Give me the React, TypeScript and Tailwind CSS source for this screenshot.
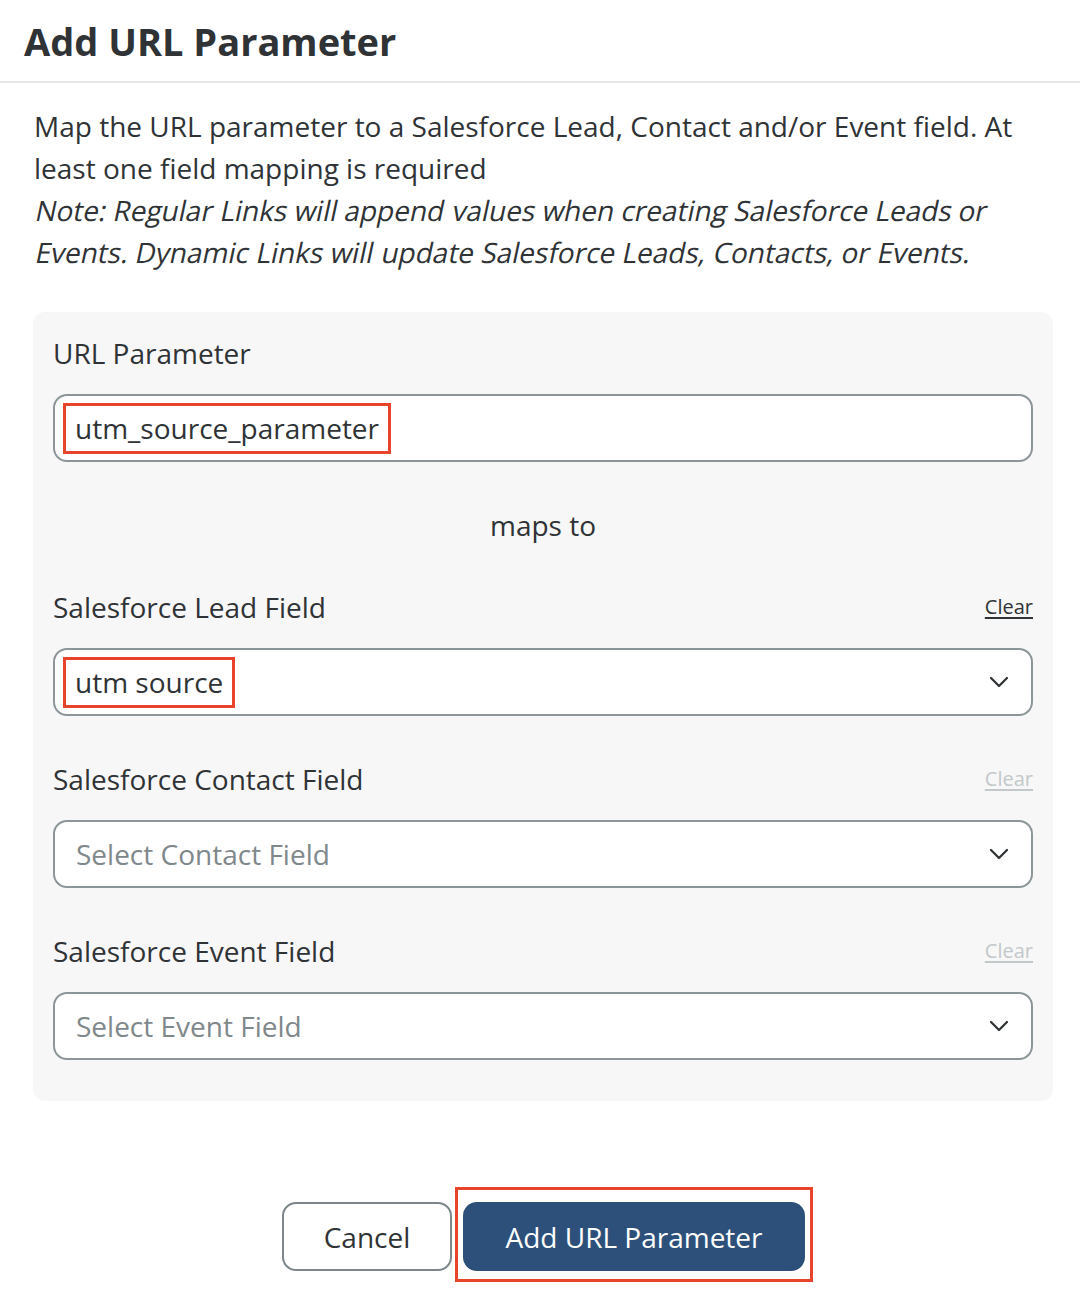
import { ChevronDown } from 'lucide-react'

const font = { fontFamily: '"Open Sans", "Noto Sans", sans-serif' }

const note =
  'Note: Regular Links will append values when creating Salesforce Leads or Events. Dynamic Links will update Salesforce Leads, Contacts, or Events.'

function Highlight({ children }: { children: React.ReactNode }) {
  return (
    <span className="inline-flex h-[51px] items-center border-[3px] border-[#e8432b] px-[9px]">
      {children}
    </span>
  )
}

function SelectField({
  label,
  value,
  placeholder,
  active,
}: {
  label: string
  value?: React.ReactNode
  placeholder?: string
  active?: boolean
}) {
  return (
    <div>
      <div className="flex h-[40px] items-center justify-between">
        <span className="text-[28px] text-[#2f3336]">{label}</span>
        <span
          className={
            'text-[20px] underline underline-offset-[3px] ' +
            (active ? 'text-[#2f3336]' : 'text-[#c3c8ca]')
          }
        >
          Clear
        </span>
      </div>
      <div className="mt-[21px] flex h-[68px] items-center justify-between rounded-[14px] border-2 border-[#8c9699] bg-white pl-[8px] pr-[16px]">
        {value ? (
          value
        ) : (
          <span className="pl-[13px] text-[28px] text-[#7f888b]">{placeholder}</span>
        )}
        <ChevronDown className="h-[32px] w-[32px] text-[#2f3336]" strokeWidth={1.7} />
      </div>
    </div>
  )
}

export default function App() {
  return (
    <div className="w-[1080px] h-[1302px] bg-white text-[#2f3336]" style={font}>
      <div className="flex h-[83px] items-center border-b-2 border-[#e6e6e6] px-[24px]">
        <h1 className="text-[38px] font-bold leading-none text-[#2f3336]">Add URL Parameter</h1>
      </div>

      <div className="px-[34px] pt-[22px] text-[28px] leading-[42px]">
        <p>
          Map the URL parameter to a Salesforce Lead, Contact and/or Event field. At least one field
          mapping is required
        </p>
        {/* reference uses a synthetic oblique of the regular face */}
        <p>
          {note.split(' ').map((w, i) => (
            <span key={i}>
              <span className="inline-block origin-[50%_75%] -skew-x-12">{w}</span>{' '}
            </span>
          ))}
        </p>
      </div>

      <div className="ml-[33px] mr-[27px] mt-[39px] rounded-[12px] bg-[#f7f7f7] px-[20px] pt-[21px] pb-[41px]">
        <div className="flex h-[40px] items-center text-[28px]">URL Parameter</div>
        <div className="mt-[21px] flex h-[68px] items-center rounded-[14px] border-2 border-[#8c9699] bg-white pl-[8px]">
          <Highlight>
            <span className="text-[28px]">utm_source_parameter</span>
          </Highlight>
        </div>

        <div className="flex h-[125px] items-center justify-center text-[28px]">maps to</div>

        <div className="flex flex-col gap-[43px]">
          <SelectField
            label="Salesforce Lead Field"
            active
            value={
              <Highlight>
                <span className="text-[28px]">utm source</span>
              </Highlight>
            }
          />
          <SelectField label="Salesforce Contact Field" placeholder="Select Contact Field" />
          <SelectField label="Salesforce Event Field" placeholder="Select Event Field" />
        </div>
      </div>

      <div className="mt-[86px] flex justify-center gap-[3px] pl-[15px]">
        <button className="mt-[15px] h-[69px] w-[170px] rounded-[14px] border-2 border-[#7d868a] bg-white text-[28px] text-[#2f3336]">
          Cancel
        </button>
        <div className="border-[3px] border-[#e8432b] p-[5px] pt-[12px] pb-[8px]">
          <button className="h-[69px] w-[342px] rounded-[14px] bg-[#2c5079] text-[28px] text-white">
            Add URL Parameter
          </button>
        </div>
      </div>
    </div>
  )
}
